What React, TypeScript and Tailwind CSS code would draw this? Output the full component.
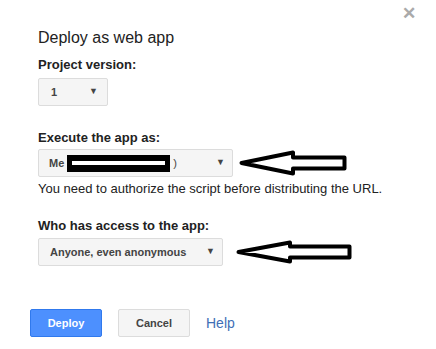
import React from "react";

const Arrow = ({ w, h }: { w: number; h: number }) => {
  // hand-drawn left pointing arrow outline
  const mid = h / 2;
  const headX = 54;
  return (
    <svg width={w} height={h} viewBox={`0 0 ${w} ${h}`}>
      <path
        d={`M2.5 ${mid} L${headX} 2.5 L${headX} ${mid - 5.5} L${w - 2.5} ${mid - 5.5} L${w - 2.5} ${mid + 5.5} L${headX} ${mid + 5.5} L${headX} ${h - 2.5} Z`}
        fill="white"
        stroke="black"
        strokeWidth={4}
        strokeLinejoin="round"
      />
    </svg>
  );
};

const Caret = () => <span className="text-[9px] text-[#444]">▼</span>;

const Label: React.FC<{ children: React.ReactNode; className?: string }> = ({
  children,
  className = "",
}) => (
  <div className={`text-[13px] leading-4 font-bold text-[#222] ${className}`}>
    {children}
  </div>
);

export default function App() {
  return (
    <div
      className="relative w-[436px] h-[349px] bg-white overflow-hidden"
      style={{ fontFamily: '"Liberation Sans", Arial, sans-serif' }}
    >
      <button className="absolute right-[20px] top-[5px] text-[17px] leading-none font-bold text-[#aaa]">
        ✕
      </button>

      <div className="pl-[38px] pt-[28px]">
        <h1 className="text-[16px] leading-5 text-[#222]">Deploy as web app</h1>

        <Label className="mt-[9px]">Project version:</Label>
        <div className="mt-[5px] flex items-center justify-between w-[70px] h-[28px] pl-[12px] pr-[9px] bg-[#f5f5f5] border border-[#dcdcdc] rounded-[2px] text-[11px] font-bold text-[#444]">
          <span>1</span>
          <Caret />
        </div>

        <Label className="mt-[24px]">Execute the app as:</Label>
        <div className="mt-[3px] flex items-center gap-[6px]">
          <div className="flex items-center justify-between w-[195px] h-[28px] pl-[10px] pr-[7px] bg-[#f5f5f5] border border-[#dcdcdc] rounded-[2px] text-[11px] font-bold text-[#444]">
            <span className="flex items-center gap-[3px]">
              Me
              <span className="inline-block w-[103px] h-[17px] bg-black border-[5px] border-black">
                <span className="block mt-[1px] h-[4px] bg-white" />
              </span>
              <span className="font-normal">)</span>
            </span>
            <Caret />
          </div>
          <Arrow w={108} h={26} />
        </div>
        <p className="mt-[4px] text-[13px] leading-4 text-[#222]">
          You need to authorize the script before distributing the URL.
        </p>

        <Label className="mt-[21px]">Who has access to the app:</Label>
        <div className="mt-[4px] flex items-center gap-[13px]">
          <div className="flex items-center justify-between w-[185px] h-[28px] pl-[11px] pr-[7px] bg-[#f5f5f5] border border-[#dcdcdc] rounded-[2px] text-[11px] font-bold text-[#444]">
            <span>Anyone, even anonymous</span>
            <Caret />
          </div>
          <Arrow w={116} h={24} />
        </div>
      </div>

      <div className="flex items-center pl-[30px] mt-[43px]">
        <button className="w-[72px] h-[28px] rounded-[2px] bg-[#4d90fe] border border-[#3079ed] text-white text-[11px] font-bold">
          Deploy
        </button>
        <button className="ml-[16px] w-[72px] h-[28px] rounded-[2px] bg-[#f5f5f5] border border-[#dcdcdc] text-[#444] text-[11px] font-bold">
          Cancel
        </button>
        <a className="ml-[16px] text-[14px] text-[#3f6fb6]">Help</a>
      </div>
    </div>
  );
}
